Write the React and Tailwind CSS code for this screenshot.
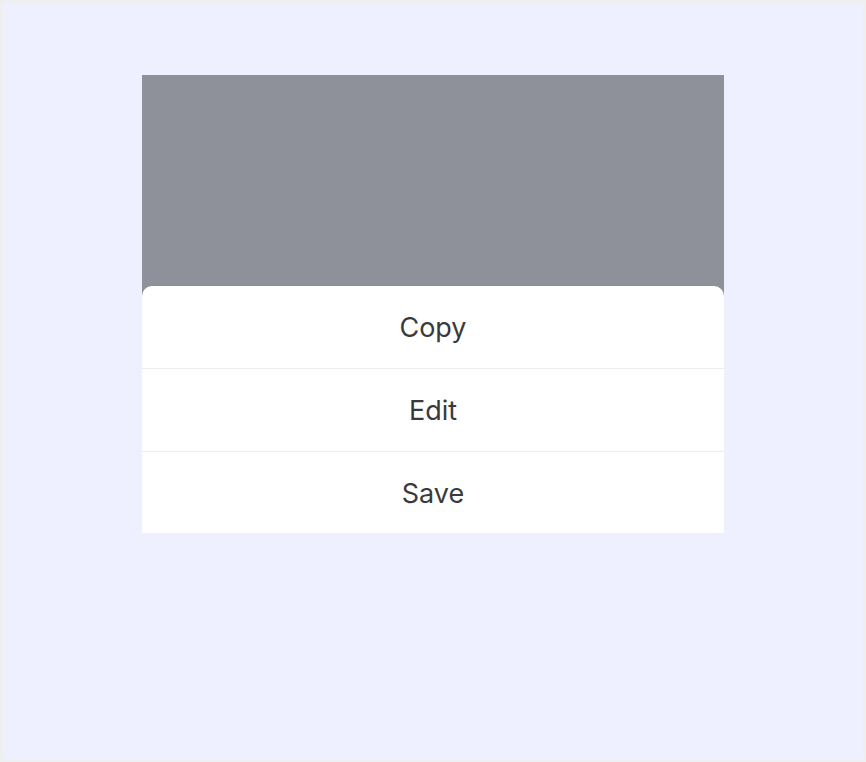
const items = ["Copy", "Edit", "Save"];

export default function App() {
  return (
    <div className="h-screen w-full border-[3px] border-[#efefef] bg-[#eef0ff] pt-[72px] flex justify-center items-start font-['Inter',sans-serif]">
      <div className="w-[582px] bg-[#8e9199] pt-[211px]">
        <div className="bg-white rounded-t-[10px] overflow-hidden">
          {items.map((label, i) => (
            <div
              key={label}
              className={`flex items-center justify-center pt-[3px] text-[27px] text-[#3a3a3a] ${
                i < items.length - 1 ? "h-[83px] border-b border-[#ececec]" : "h-[81px]"
              }`}
            >
              {label}
            </div>
          ))}
        </div>
      </div>
    </div>
  );
}
